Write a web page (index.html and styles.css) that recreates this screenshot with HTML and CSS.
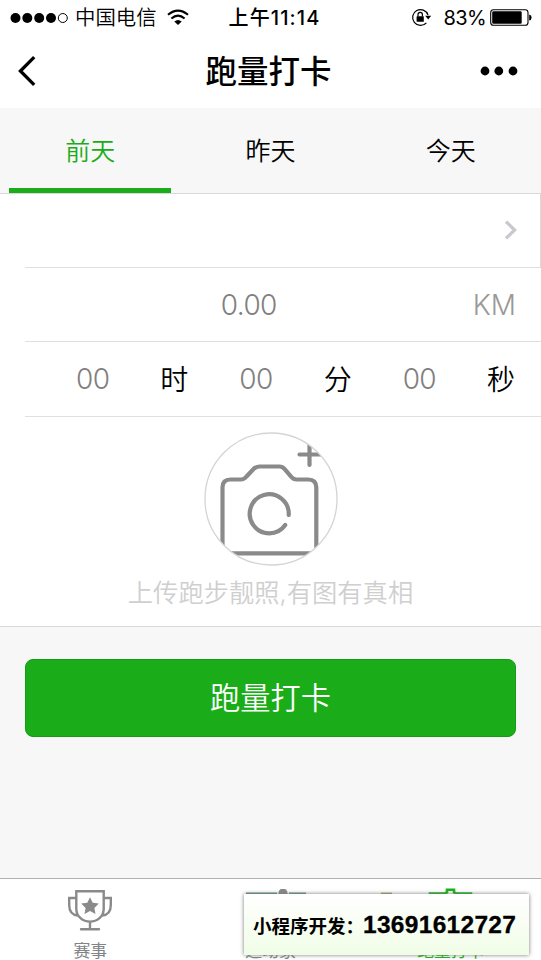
FILE: index.html
```html
<!DOCTYPE html>
<html lang="zh-CN">
<head>
<meta charset="utf-8">
<title>跑量打卡</title>
<link rel="stylesheet" href="styles.css">
</head>
<body>
<div class="app">
  <header class="status">
    <div class="status-left">
      <svg class="signal" width="58" height="12" viewBox="0 0 58 12"><circle cx="5.5" cy="6" r="5"/><circle cx="17.3" cy="6" r="5"/><circle cx="29.2" cy="6" r="5"/><circle cx="41" cy="6" r="5"/><circle cx="52.8" cy="6" r="4.5" fill="none" stroke="#000"/></svg>
      <span class="carrier">中国电信</span>
      <svg class="wifi" width="22" height="17" viewBox="0 0 22 17"><g fill="none" stroke="#000" stroke-width="2.1"><path d="M1 5.8Q11-2.6 21 5.8M4.4 9.5Q11 3.9 17.6 9.5"/></g><path d="M7.3 12.4Q11 9.4 14.7 12.4L11 16.1Z"/></svg>
    </div>
    <span class="time">上午11:14</span>
    <div class="status-right">
      <svg width="21" height="19" viewBox="0 0 21 19"><path d="M17 7A7.9 7.9 0 1 0 15.4 14.8" fill="none" stroke="#000" stroke-width="1.2"/><path d="M14.2 7.8H20.2L17.2 11.5Z"/><rect x="5.6" y="8.2" width="7.2" height="5.5" rx=".5"/><path d="M7 8.5V6.6a2.2 2.2 0 0 1 4.4 0v1.9" fill="none" stroke="#000" stroke-width="1.2"/></svg>
      <span class="percent">83%</span>
      <svg width="42" height="17" viewBox="0 0 42 17"><rect x=".7" y=".7" width="37.3" height="15.6" rx="2.8" fill="#fff" stroke="#000" stroke-width="1.1"/><rect x="2.2" y="2.2" width="29.5" height="12.6" rx="1.3"/><path d="M39.2 5.5Q41.6 6 41.6 8.5T39.2 11.5Z"/></svg>
    </div>
  </header>
  <nav class="nav">
    <svg width="18" height="30" viewBox="0 0 18 30"><path d="M16.2 1.2 2.4 15 16.2 28.8" fill="none" stroke="#000" stroke-width="3.3"/></svg>
    <h1>跑量打卡</h1>
    <svg width="38" height="10" viewBox="0 0 38 10"><circle cx="5" cy="5" r="4.4"/><circle cx="18.8" cy="5" r="4.4"/><circle cx="33" cy="5" r="4.4"/></svg>
  </nav>
  <div class="tabs">
    <div class="tab active">前天</div>
    <div class="tab">昨天</div>
    <div class="tab">今天</div>
  </div>
  <main class="form">
    <div class="row picker"><svg width="14" height="20" viewBox="0 0 14 20"><path d="M2 1.6 10.6 10 2 18.4" fill="none" stroke="#c8c8cd" stroke-width="3.3"/></svg></div>
    <div class="row distance"><span class="value">0.00</span><span class="unit">KM</span></div>
    <div class="row duration">
      <div class="part"><span class="value">00</span><span>时</span></div>
      <div class="part"><span class="value">00</span><span>分</span></div>
      <div class="part"><span class="value">00</span><span>秒</span></div>
    </div>
    <div class="upload">
      <svg width="134" height="134" viewBox="0 0 134 134">
        <defs><clipPath id="round"><circle cx="67" cy="67" r="66"/></clipPath></defs>
        <g clip-path="url(#round)" fill="none" stroke="#8a8a8a" stroke-width="4.2" stroke-linecap="round">
          <path d="M18.5 123.3V55.5Q18.5 47.5 26.5 47.5H37Q40 47.5 42.5 44.5L50 36.5Q52.5 34.5 55.5 34.5H75.5Q78.5 34.5 80.5 37L87.5 45Q89.5 47.5 92.5 47.5H104Q112.3 47.5 112.3 55.5V123.3"/>
          <path d="M18.5 121.4H112.3"/>
          <path d="M84.7 83A19.5 19.5 0 1 0 81.2 93"/>
          <path d="M95.5 22.5H119M105.5 11V33"/>
        </g>
        <circle cx="67" cy="67" r="66" fill="none" stroke="#d4d4d4" stroke-width="1.3"/>
      </svg>
      <p>上传跑步靓照,有图有真相</p>
    </div>
  </main>
  <div class="action"><button class="submit">跑量打卡</button></div>
  <footer class="tabbar">
    <div class="item">
      <svg width="46" height="44" viewBox="0 0 46 44"><g fill="none" stroke="#8a8a8a" stroke-width="2.4" stroke-linecap="round"><path d="M9.3 2.2H36.7V20C36.7 27.5 30 32.6 23 32.6S9.3 27.5 9.3 20ZM9 9H2.2V16C2.2 22 5 25.8 10.7 26.5M37 9H43.8V16C43.8 22 41 25.8 35.3 26.5M23 33V40M14 40.2H32"/></g><path fill="#8a8a8a" d="m23 8.2 2.7 5.5 6.1.9-4.4 4.3 1.1 6.1-5.5-2.9-5.5 2.9 1.1-6.1-4.4-4.3 6.1-.9Z"/></svg>
      <span>赛事</span>
    </div>
    <div class="item">
      <svg width="72" height="44" viewBox="0 0 72 44"><path d="M12 4.5H72" stroke="#5f9088" stroke-width="2"/><path d="M43 4.5H55" stroke="#fff" stroke-width="3"/><circle cx="49" cy="4" r="4.5" fill="#888"/></svg>
      <span>运动家</span>
    </div>
    <div class="item current">
      <svg class="camera-tab" width="116" height="44" viewBox="0 0 116 44"><path d="M-12 4.6H-1" stroke="#8cab60" stroke-width="2"/><path d="M37 40V4.6H51L54 3.4V.8H61V3.4L64 4.6H78V40Z" fill="none" stroke="#16b516" stroke-width="2.6"/></svg>
      <span>跑量打卡</span>
    </div>
  </footer>
  <aside class="notice"><span class="notice-label">小程序开发：</span><span class="phone">13691612727</span></aside>
</div>
</body>
</html>
```

FILE: styles.css
```css
* { box-sizing: border-box; }
body { margin: 0; font-family: Inter, "Noto Sans CJK SC", sans-serif; color: #000; }
svg { display: block; flex: none; }
.app { position: relative; width: 541px; height: 960px; overflow: hidden; background: #f7f7f7; display: flex; flex-direction: column; }
.status { height: 35px; background: #fff; display: grid; grid-template-columns: 1fr auto 1fr; align-items: center; padding: 0 9px 0 10px; font-size: 20px; line-height: 34px; }
.status-left, .status-right { display: flex; align-items: center; }
.carrier { margin: 0 10px 0 7px; font-size: 20.4px; font-weight: 350; }
.wifi { margin-bottom: 1px; }
.time { font-weight: 500; letter-spacing: 1.1px; margin-left: 7px; }
.status-right { justify-content: flex-end; }
.percent { margin: 0 4px 0 11px; letter-spacing: -.6px; }
.nav { height: 73px; background: #fff; display: flex; align-items: center; justify-content: space-between; padding: 0 23px 2px 18px; }
.nav h1 { margin: 0 0 0 21px; padding-top: 3px; font-size: 31.5px; line-height: 68px; font-weight: 500; }
.tabs { height: 86px; display: grid; grid-template-columns: repeat(3, 1fr); border-bottom: 1px solid #d8d8d8; }
.tab { height: 85px; font-size: 25px; line-height: 86px; font-weight: 350; text-align: center; margin: 0 9px; }
.active { color: #1aad19; border-bottom: 5px solid #1aad19; }
.form { background: #fff; height: 433px; border-bottom: 1px solid #d9d9d9; }
.row { margin-left: 25px; border-bottom: 1px solid #e0e0e0; padding-right: 26px; display: flex; align-items: center; font-size: 28px; font-weight: 350; }
.picker { height: 74px; justify-content: flex-end; border-right: 1px solid #d8d8d8; padding: 0 22px 1px 0; }
.distance { height: 74px; padding-right: 25px; display: grid; grid-template-columns: 1fr auto; }
.value { color: #808080; font-weight: 350; text-align: center; letter-spacing: -.6px; }
.unit { color: #999; font-weight: 350; }
.duration { height: 75px; padding-bottom: 1px; display: grid; grid-template-columns: repeat(3, 1fr); }
.duration .value { padding-top: 1px; }
.part { display: grid; grid-template-columns: 1fr 28px; align-items: center; }
.part span:last-child { line-height: 40px; padding-top: 2px; }
.upload { display: flex; flex-direction: column; align-items: center; padding: 15px 0 0; }
.upload p { margin: 9px 0 0; font-size: 25.3px; line-height: 36px; font-weight: 350; color: #cfcfcf; }
.action { padding: 32px 25px 0; height: 251px; }
.submit { display: block; width: 100%; height: 78px; padding: 0 0 4px; border: 1px solid #159c14; border-radius: 8px; background: #1aad19; color: #fff; font: 350 30.2px/72px "Noto Sans CJK SC", sans-serif; }
.tabbar { height: 82px; background: #fff; border-top: 1px solid #b2b2b2; display: grid; grid-template-columns: repeat(3, 1fr); padding-top: 10px; }
.item { display: flex; flex-direction: column; align-items: center; color: #808388; font-size: 16.8px; line-height: 24px; }
.item span { margin-top: 6px; }
.camera-tab { overflow: visible; }
.current { color: #16b516; }
.notice { position: absolute; left: 244px; top: 894px; width: 285px; height: 61px; display: flex; align-items: center; padding: 1px 0 0 9px; background: linear-gradient(#fff, #f0fde6); box-shadow: 0 0 4px #777; font-weight: 700; white-space: nowrap; }
.notice-label { font-size: 18.5px; width: 110px; }
.phone { font-family: "Liberation Sans", sans-serif; font-size: 24.5px; line-height: 28px; letter-spacing: .3px; -webkit-text-stroke: .3px #000; }
```
